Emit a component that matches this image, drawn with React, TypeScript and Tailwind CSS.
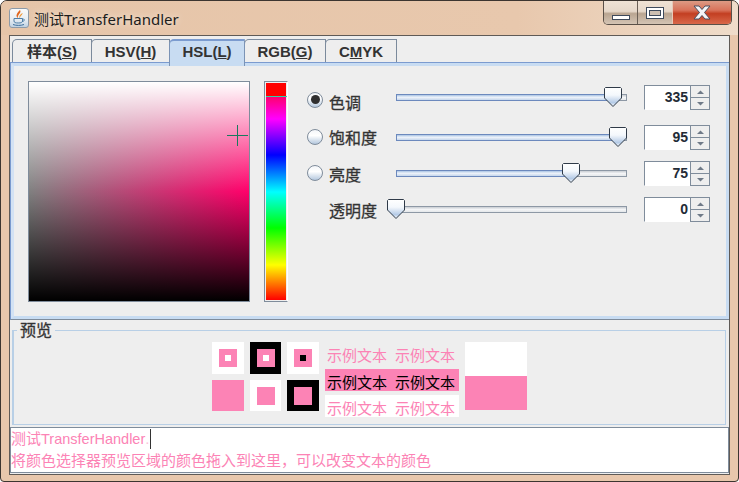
function JavaIcon() {
  return (
    <svg width="20" height="20" viewBox="0 0 20 20" className="mt-[7px] ml-[8px] shrink-0">
      <defs>
        <linearGradient id="jbg" x1="0" y1="0" x2="0" y2="1">
          <stop offset="0" stopColor="#fbfbfb" />
          <stop offset="0.6" stopColor="#e6ecf2" />
          <stop offset="1" stopColor="#bcd0e2" />
        </linearGradient>
      </defs>
      <rect x="0.5" y="0.5" width="19" height="19" rx="2.5" fill="url(#jbg)" stroke="#8c9aa8" />
      <path d="M11 2 C13 5 8 6.5 9 10 C6 8 8 5 11 2Z" fill="#e2671f" />
      <path d="M13.5 5 C14 7 10.5 8 11 10.5 C9.5 8.5 11 6.5 13.5 5Z" fill="#ef9a3c" />
      <path d="M5 10.5 H13.5 V13 C13.5 14.5 12 15 9.2 15 C6.5 15 5 14.5 5 13Z" fill="none" stroke="#4f7fa8" />
      <path d="M13.5 11 C16 10.5 16 13.5 13 13.5" fill="none" stroke="#4f7fa8" />
      <path d="M4 16.5 C7 17.7 12 17.7 15 16.5" fill="none" stroke="#3f6f9c" />
    </svg>
  );
}

function WindowButtons() {
  return (
    <div className="ml-auto mr-[6px] flex h-[24px] overflow-hidden rounded-b-[5px] border border-t-0 border-[#5a5048]">
      <div className="flex w-[34px] items-end justify-center border-r border-[#6a5f55] bg-[linear-gradient(to_bottom,#efe2d5_0%,#e6d8ca_45%,#b9a591_55%,#d4c4b4_100%)] pb-[4px]">
        <div className="h-[5px] w-[18px] border border-[#3e4a5c] bg-white" />
      </div>
      <div className="flex w-[34px] items-center justify-center bg-[linear-gradient(to_bottom,#efe2d5_0%,#e6d8ca_45%,#b9a591_55%,#d4c4b4_100%)]">
        <div className="flex h-[12px] w-[18px] items-center justify-center border border-[#3e4a5c] bg-white">
          <div className="h-[6px] w-[12px] border border-[#3e4a5c] bg-[#cdbfb2]" />
        </div>
      </div>
      <div className="flex w-[59px] items-center justify-center border-l border-[#e9c9b8] bg-[linear-gradient(to_bottom,#dc9a84_0%,#d8725a_40%,#c33f22_55%,#d9684a_100%)]">
        <svg width="18" height="15" viewBox="0 0 18 15">
          <path d="M1 1 H6 L9 4.5 L12 1 H17 L11.5 7.5 L17 14 H12 L9 10.5 L6 14 H1 L6.5 7.5Z" fill="#f4f5f8" stroke="#4a4f5e" />
        </svg>
      </div>
    </div>
  );
}

function Tab({ w, children, active }: { w: string; children: React.ReactNode; active?: boolean }) {
  return (
    <div
      className={`${w} ${
        active
          ? "relative z-10 h-[27px] rounded-tl-[5px] border-x border-t-2 border-x-[#7b93b5] border-t-[#7b9bcf] bg-[#c8dcf2] pt-[1px]"
          : "h-[24px] rounded-tl-[5px] border-x border-t border-[#7b8a9c] bg-[#eeeeee] pt-[2px]"
      } -mr-px shrink-0 text-center text-[15px] leading-[20px] font-bold text-[#333333]`}
    >
      {children}
    </div>
  );
}

function Spin({ dir }: { dir: "up" | "down" }) {
  return (
    <div className="flex flex-1 items-center justify-center border border-[#7f8c9b] bg-[#eeeeee] [&+&]:-mt-px">
      <svg width="7" height="4" viewBox="0 0 7 4">
        <path d={dir === "up" ? "M3.5 0.5 L7 4 H0Z" : "M0 0 H7 L3.5 3.5Z"} fill="#6f7a88" />
      </svg>
    </div>
  );
}

function Thumb() {
  return (
    <svg width="18" height="20" viewBox="0 0 18 20" className="block">
      <defs>
        <linearGradient id="thumb" x1="0" y1="0" x2="0" y2="1">
          <stop offset="0" stopColor="#ffffff" />
          <stop offset="0.4" stopColor="#f4f8fc" />
          <stop offset="0.8" stopColor="#b4cae6" />
          <stop offset="1" stopColor="#ffffff" />
        </linearGradient>
      </defs>
      <path d="M1.5 0.5 H16.5 L17.5 1.5 V11 L9 19.5 L0.5 11 V1.5Z" fill="url(#thumb)" stroke="#2f3a48" />
    </svg>
  );
}

type Row = {
  label: string;
  radio?: "on" | "off";
  value: string;
  fill: string;
  thumb: string;
  rowGap: string;
  radioTop: string;
  labelTop: string;
  trackTop: string;
};

const rows: Row[] = [
  { label: "色调", radio: "on", value: "335", fill: "w-[217px]", thumb: "left-[208px]", rowGap: "mt-0", radioTop: "mt-[4px]", labelTop: "mt-[13px]", trackTop: "-mt-[1px]" },
  { label: "饱和度", radio: "off", value: "95", fill: "w-[222px]", thumb: "left-[213px]", rowGap: "mt-[15px]", radioTop: "-mt-[1px]", labelTop: "mt-[2px]", trackTop: "-mt-[1px]" },
  { label: "亮度", radio: "off", value: "75", fill: "w-[175px]", thumb: "left-[166px]", rowGap: "mt-[11px]", radioTop: "-mt-[1px]", labelTop: "mt-[4px]", trackTop: "-mt-[1px]" },
  { label: "透明度", value: "0", fill: "w-0", thumb: "-left-[9px]", rowGap: "mt-[11px]", radioTop: "", labelTop: "mt-[4px]", trackTop: "-mt-[1px]" },
];

function ControlRow({ r }: { r: Row }) {
  return (
    <div className={`flex h-[25px] items-center ${r.rowGap}`}>
      <div className={`flex w-[22px] shrink-0 items-center ${r.radioTop}`}>
        {r.radio && (
          <div className="flex h-[16px] w-[16px] items-center justify-center rounded-full border border-[#7f8c9b] bg-[linear-gradient(to_bottom,#f4f6f9,#ffffff_40%,#b4c8de)]">
            {r.radio === "on" && <div className="h-[9px] w-[9px] rounded-full bg-[#2f2f2f]" />}
          </div>
        )}
      </div>
      <div className={`w-[67px] shrink-0 text-[16px] leading-[20px] text-[#333333] [-webkit-text-stroke:0.3px_#333333] ${r.labelTop}`}>{r.label}</div>
      <div className={`relative h-[7px] w-[231px] shrink-0 ${r.trackTop}`}>
        <div className="flex h-full border border-[#8d98a5] bg-[linear-gradient(to_bottom,#c8cdd3,#f4f5f7_50%,#e4e7ea)]">
          <div className={`${r.fill} -my-px -ml-px h-[7px] ${r.fill === "w-0" ? "" : "border border-[#6c89bd]"} bg-[linear-gradient(to_bottom,#a9c3e4,#eef3fa_45%,#c4d6ec)]`} />
        </div>
        <div className={`absolute -top-[7px] ${r.thumb}`}>
          <Thumb />
        </div>
      </div>
      <div className="ml-[17px] flex h-full w-[66px] shrink-0">
        <div className="w-[47px] border border-[#7f8c9b] border-b-white bg-white pr-[2px] text-right text-[14px] leading-[23px] font-bold text-[#232b36]">
          {r.value}
        </div>
        <div className="-ml-px flex flex-1 flex-col">
          <Spin dir="up" />
          <Spin dir="down" />
        </div>
      </div>
    </div>
  );
}

function Swatch({ outer, inner, core, size }: { outer: string; inner?: string; core?: string; size: string }) {
  return (
    <div className={`flex items-center justify-center ${size} ${outer}`}>
      {inner && (
        <div className={`flex h-[18px] w-[18px] items-center justify-center ${inner}`}>
          {core && <div className={`h-[6px] w-[6px] ${core}`} />}
        </div>
      )}
    </div>
  );
}

function SampleRow({ cls }: { cls: string }) {
  return (
    <div className={`flex h-[22px] gap-[8px] px-[2px] text-[15px] ${cls}`}>
      <span>示例文本</span>
      <span>示例文本</span>
    </div>
  );
}

export default function App() {
  return (
    <div className="flex h-[482px] w-[739px] flex-col overflow-hidden rounded-t-[7px] rounded-b-[4px] border border-[#3c3530] bg-[#e8c7ac] [font-family:'Liberation_Sans','Noto_Sans_CJK_SC',sans-serif]">
      <div className="flex h-[34px] shrink-0 items-start bg-[linear-gradient(to_right,#e6c5a9,#e8c8ad_70%,#efdcca)]">
        <JavaIcon />
        <div className="mt-[8px] ml-[5px] text-[15px] leading-[20px] text-[#1c1c1c] [font-family:'Noto_Sans','Noto_Sans_CJK_SC',sans-serif] [text-shadow:0_0_6px_#f6ece2]">
          测试TransferHandler
        </div>
        <WindowButtons />
      </div>

      <div className="mx-[8px] flex h-[440px] flex-col border border-[#5f5a56] bg-[#eeeeee]">
        <div className="flex h-[26px] shrink-0 items-start pt-[3px] pl-[2px]">
          <Tab w="w-[80px]">样本(<span className="underline">S</span>)</Tab>
          <Tab w="w-[79px]">HSV(<span className="underline">H</span>)</Tab>
          <Tab w="w-[76px]" active>HSL(<span className="underline">L</span>)</Tab>
          <Tab w="w-[82px]">RGB(<span className="underline">G</span>)</Tab>
          <Tab w="w-[72px]">C<span className="underline">M</span>YK</Tab>
        </div>

        <div className="flex h-[258px] shrink-0 border-t border-b border-l border-[#7b9bcf] border-b-[#7f8c9b]">
          <div className="flex flex-1 border-x-[3px] border-t-[3px] border-b-[3px] border-[#c8dcf2] border-l-[#d3e2f4]">
            <div className="flex flex-1 border-0 pt-[15px] pl-[14px]">
              <div className="relative h-[221px] w-[222px] shrink-0 border border-[#7f8c9b]">
                <div className="h-full w-full bg-[linear-gradient(to_bottom,#ffffff,transparent_50%,#000000),linear-gradient(to_right,#808080,#ff006a)]" />
                <div className="absolute top-[53px] left-[198px] h-px w-[21px] bg-[#1a7a5e]" />
                <div className="absolute top-[43px] left-[208px] h-[21px] w-px bg-[#1a7a5e]" />
              </div>
              <div className="relative ml-[14px] h-[221px] w-[24px] shrink-0 border border-[#7f8c9b] border-r-white p-[1px]">
                <div className="h-full w-full bg-[linear-gradient(to_bottom,#ff0000_0,#ff0000_14px,#ff0070_14px,#ff00ff_36px,#0000ff_72px,#00ffff_109px,#00ff00_145px,#ffff00_182px,#ff0000_217px)]" />
                <div className="absolute top-[14px] left-[1px] h-px w-[21px] bg-[#2fd0a8]" />
              </div>
              <div className="ml-[19px] flex flex-col pt-[4px]">
                {rows.map((r) => (
                  <ControlRow key={r.label} r={r} />
                ))}
              </div>
            </div>
          </div>
        </div>

        <div className="relative mt-[10px] mr-[3px] ml-[2px] flex h-[95px] shrink-0 justify-center border border-l-2 border-[#b8cfe6] pt-[11px]">
          <div className="absolute -top-[9px] left-[3px] bg-[#eeeeee] px-[3px] text-[16px] leading-[18px] text-[#333333] [-webkit-text-stroke:0.3px_#333333]">
            预览
          </div>
          <div className="grid grid-cols-[32px_31px_32px] grid-rows-[32px_31px] gap-[6px]">
            <Swatch size="h-[32px] w-[32px]" outer="bg-white" inner="bg-[#fc83b5]" core="bg-white" />
            <Swatch size="h-[32px] w-[31px]" outer="bg-black" inner="bg-[#fc83b5]" core="bg-white" />
            <Swatch size="h-[32px] w-[32px]" outer="bg-white" inner="bg-[#fc83b5]" core="bg-black" />
            <Swatch size="h-[31px] w-[32px]" outer="bg-[#fc83b5]" />
            <Swatch size="h-[31px] w-[31px]" outer="bg-white" inner="bg-[#fc83b5]" />
            <Swatch size="h-[31px] w-[32px]" outer="bg-black" inner="bg-[#fc83b5]" />
          </div>
          <div className="ml-[6px] flex w-[134px] flex-col pt-[3px]">
            <SampleRow cls="leading-[22px] text-[#fc83b5]" />
            <SampleRow cls="mt-[2px] bg-[#fc83b5] pt-[5px] leading-[17px] text-black" />
            <SampleRow cls="mt-[4px] bg-white pt-[5px] leading-[17px] text-[#fc83b5]" />
          </div>
          <div className="ml-[6px] flex h-[68px] w-[62px] flex-col">
            <div className="h-[34px] bg-white" />
            <div className="h-[34px] bg-[#fc83b5]" />
          </div>
        </div>

        <div className="mt-[2px] h-[46px] shrink-0 border border-[#7f8c9b] bg-white text-[15px] leading-[21px] text-[#fc83b5]">
          <div className="flex h-[22px] items-center">
            <span>测试<span className="text-[14.5px]">TransferHandler</span><span className="opacity-50">.</span></span>
            <span className="ml-[1px] h-[20px] w-px bg-[#333333]" />
          </div>
          <div>将颜色选择器预览区域的颜色拖入到这里，可以改变文本的颜色</div>
        </div>
      </div>
    </div>
  );
}
